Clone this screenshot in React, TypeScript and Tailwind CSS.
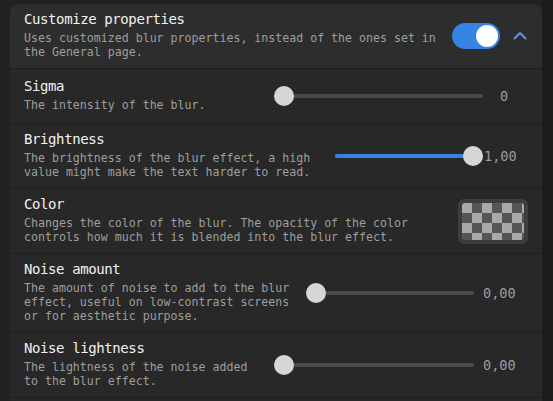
import React from "react";

const mono = { fontFamily: '"DejaVu Sans Mono", "Liberation Mono", monospace' };

function Slider({ width, value, filled }: { width: number; value: number; filled?: boolean }) {
  const thumbLeft = value * (width - 20);
  return (
    <div className="relative h-[20px] flex-none" style={{ width }}>
      <div className="absolute left-0 right-0 top-[8px] h-[4px] rounded-full bg-[#4a4a4a]" />
      {filled && (
        <div
          className="absolute left-0 top-[8px] h-[4px] rounded-full bg-[#3584e4]"
          style={{ width: thumbLeft + 10 }}
        />
      )}
      <div
        className="absolute top-0 h-[20px] w-[20px] rounded-full bg-[#d6d6d6]"
        style={{ left: thumbLeft }}
      />
    </div>
  );
}

function Title({ children }: { children: React.ReactNode }) {
  return (
    <div className="h-[20px] text-[14px] leading-[20px] tracking-[-0.4px] text-[#f2f2f2] whitespace-nowrap" style={mono}>
      {children}
    </div>
  );
}

function Desc({ lines }: { lines: string[] }) {
  return (
    <div className="mt-[2px] text-[11.6px] leading-[14px] text-[#9e9e9e] whitespace-nowrap" style={mono}>
      {lines.map((l, i) => (
        <div key={i}>{l}</div>
      ))}
    </div>
  );
}

function Value({ children, ml }: { children: React.ReactNode; ml: string }) {
  return (
    <div className={`${ml} text-[13.6px] leading-[18px] text-[#9a9a9a] whitespace-nowrap`} style={mono}>
      {children}
    </div>
  );
}

function Checker() {
  const cells: React.ReactNode[] = [];
  for (let r = 0; r < 4; r++) {
    for (let c = 0; c < 7; c++) {
      const light = (r + c) % 2 === 0;
      cells.push(
        <div key={`${r}-${c}`} className={light ? "h-[10px] w-[10px] bg-[#a9a9a9]" : "h-[10px] w-[10px] bg-[#555555]"} />
      );
    }
  }
  return (
    <div className="flex h-[45px] w-[70px] flex-none items-center justify-center rounded-[6px] bg-[#3d3d3d]">
      <div className="h-[37px] w-[62px] overflow-hidden rounded-[3px]">
        <div className="grid w-[70px] grid-cols-7">{cells}</div>
      </div>
    </div>
  );
}

export default function App() {
  return (
    <div className="flex h-[401px] w-[553px] overflow-hidden bg-[#212121]">
      <div className="ml-[10px] mt-[4px] flex w-[532px] flex-none flex-col overflow-hidden rounded-t-[8px]">
        {/* Header */}
        <div className="flex h-[64px] flex-none items-center bg-[#2d2d2d] pl-[14px] pr-[15px]">
          <div className="pb-[4px]">
            <Title>Customize properties</Title>
            <Desc lines={["Uses customized blur properties, instead of the ones set in", "the General page."]} />
          </div>
          <div className="ml-auto flex items-center">
            <div className="flex h-[26px] w-[48px] items-center justify-end rounded-full bg-[#3584e4] pr-[2px]">
              <div className="h-[22px] w-[22px] rounded-full bg-white" />
            </div>
            <svg className="ml-[13px]" width="14" height="10" viewBox="0 0 14 10" fill="none">
              <polyline points="1.5,7.5 7,2 12.5,7.5" stroke="#5e94db" strokeWidth="2" strokeLinecap="round" strokeLinejoin="round" />
            </svg>
          </div>
        </div>

        {/* Sigma */}
        <div className="flex h-[55px] flex-none items-center border-t border-[#1e1e1e] bg-[#282828] pl-[14px]">
          <div className="w-[250px] flex-none pb-[4px]">
            <Title>Sigma</Title>
            <Desc lines={["The intensity of the blur."]} />
          </div>
          <Slider width={209} value={0} />
          <Value ml="ml-[17px]">0</Value>
        </div>

        {/* Brightness */}
        <div className="flex h-[65px] flex-none items-center border-t border-[#1e1e1e] bg-[#282828] pl-[14px]">
          <div className="w-[311px] flex-none pb-[4px]">
            <Title>Brightness</Title>
            <Desc lines={["The brightness of the blur effect, a high", "value might make the text harder to read."]} />
          </div>
          <Slider width={148} value={1} filled />
          <Value ml="ml-[1px]">1,00</Value>
        </div>

        {/* Color */}
        <div className="flex h-[65px] flex-none items-center border-t border-[#1e1e1e] bg-[#282828] pl-[14px] pr-[14px]">
          <div className="pb-[4px]">
            <Title>Color</Title>
            <Desc lines={["Changes the color of the blur. The opacity of the color", "controls how much it is blended into the blur effect."]} />
          </div>
          <div className="ml-auto">
            <Checker />
          </div>
        </div>

        {/* Noise amount */}
        <div className="flex h-[79px] flex-none items-center border-t border-[#1e1e1e] bg-[#282828] pl-[14px]">
          <div className="w-[282px] flex-none pb-[4px]">
            <Title>Noise amount</Title>
            <Desc lines={["The amount of noise to add to the blur", "effect, useful on low-contrast screens", "or for aesthetic purpose."]} />
          </div>
          <Slider width={168} value={0} />
          <Value ml="ml-[9px]">0,00</Value>
        </div>

        {/* Noise lightness */}
        <div className="flex h-[65px] flex-none items-center border-t border-[#1e1e1e] bg-[#282828] pl-[14px]">
          <div className="w-[250px] flex-none pb-[4px]">
            <Title>Noise lightness</Title>
            <Desc lines={["The lightness of the noise added", "to the blur effect."]} />
          </div>
          <Slider width={200} value={0} />
          <Value ml="ml-[9px]">0,00</Value>
        </div>

        {/* Next row (cut off) */}
        <div className="h-[40px] flex-none border-t border-[#1e1e1e] bg-[#282828]" />
      </div>
      <div className="ml-auto h-full w-[11px] flex-none bg-[#1c1c1c]" />
    </div>
  );
}
